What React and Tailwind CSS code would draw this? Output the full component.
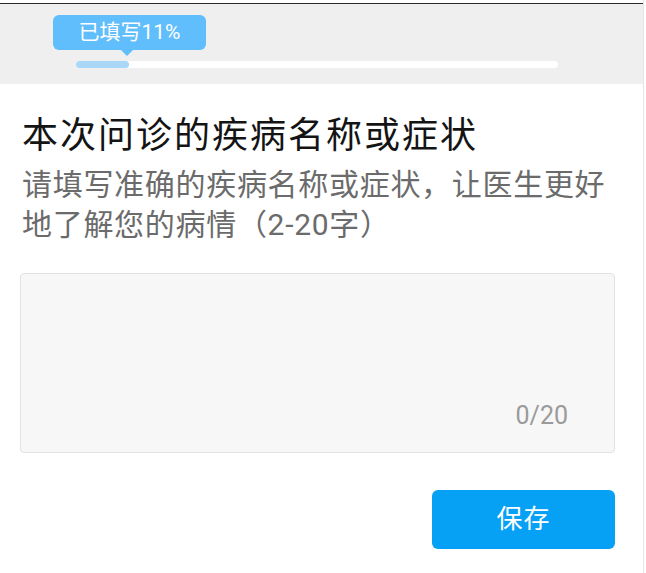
export default function App() {
  const percent = 11;

  return (
    <div className="flex w-[646px] h-[573px] bg-white overflow-hidden font-['Roboto','Noto_Sans_CJK_SC',sans-serif]">
      <div className="w-[644px] shrink-0 border-r border-[#e6e6e6] pt-[3px]">
        <div className="h-px bg-[#2b2b2b]" />

        {/* progress header */}
        <div className="h-[80px] bg-[#efefef] pt-[11px]">
          <div className="relative ml-[53px] w-[153px] h-[35px] rounded-[6px] bg-[#5fbefb] flex items-center justify-center text-white text-[21px] leading-none">
            已填写{percent}%
            <span className="absolute left-[67px] top-[34px] w-0 h-0 border-l-[7px] border-r-[7px] border-t-[7px] border-l-transparent border-r-transparent border-t-[#5fbefb]" />
          </div>
          <div className="ml-[76px] mt-[11px] w-[482px] h-[7px] rounded-full bg-white">
            <div className="w-[53px] h-full rounded-full bg-[#a9d7f8]" />
          </div>
        </div>

        {/* form */}
        <div className="pl-[20px] pr-[28px]">
          <h1 className="mt-[34px] pl-[2px] text-[36px] leading-[36px] tracking-[2px] text-[#141414] font-normal">
            本次问诊的疾病名称或症状
          </h1>
          <p className="mt-[11px] pl-[2px] text-[30px] leading-[40px] tracking-[0.7px] text-[#6b6b6b]">
            请填写准确的疾病名称或症状，让医生更好地了解您的病情（2-20字）
          </p>

          <div className="mt-[28px] h-[180px] rounded-[4px] border border-[#e2e2e2] bg-[#f7f7f7] flex items-end justify-end pr-[46px] pb-[24px]">
            <span className="text-[25px] leading-none text-[#9a9a9a]">0/20</span>
          </div>

          <div className="flex justify-end mt-[37px]">
            <button className="w-[183px] h-[59px] rounded-[6px] bg-[#06a0f4] text-white text-[26px] tracking-[1px]">
              保存
            </button>
          </div>
        </div>
      </div>
    </div>
  );
}
